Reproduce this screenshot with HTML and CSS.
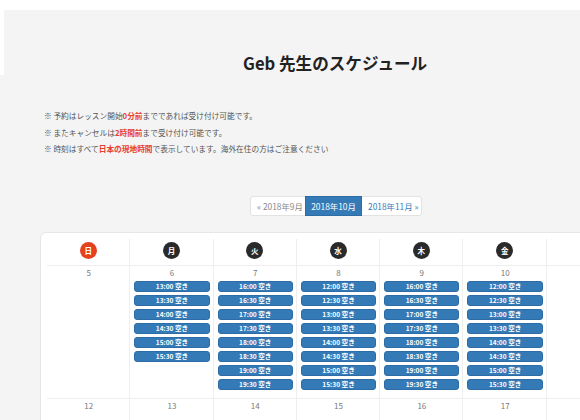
FILE: index.html
```html
<!DOCTYPE html>
<html lang="ja">
<head>
<meta charset="utf-8">
<link rel="stylesheet" href="styles.css">
</head>
<body>
<div class="page">
  <header class="hero">
    <h1 class="title">Geb 先生のスケジュール</h1>
  </header>
  <div class="notes">
    <p>※ 予約はレッスン開始<b>0分前</b>までであれば受け付け可能です。</p>
    <p>※ またキャンセルは<b>2時間前</b>まで受け付け可能です。</p>
    <p>※ 時刻はすべて<b>日本の現地時間</b>で表示しています。海外在住の方はご注意ください</p>
  </div>
  <nav class="pager">
    <a class="pg prev">« 2018年9月</a>
    <a class="pg active">2018年10月</a>
    <a class="pg next">2018年11月 »</a>
  </nav>
  <div class="card">
    <div class="cal">
      <div class="hd"><span class="dow sun">日</span></div>
      <div class="hd"><span class="dow">月</span></div>
      <div class="hd"><span class="dow">火</span></div>
      <div class="hd"><span class="dow">水</span></div>
      <div class="hd"><span class="dow">木</span></div>
      <div class="hd"><span class="dow">金</span></div>
      <div class="hd"></div>

      <div class="day"><div class="num">5</div></div>
      <div class="day"><div class="num">6</div>
        <div class="slot">13:00 空き</div><div class="slot">13:30 空き</div><div class="slot">14:00 空き</div><div class="slot">14:30 空き</div><div class="slot">15:00 空き</div><div class="slot">15:30 空き</div>
      </div>
      <div class="day"><div class="num">7</div>
        <div class="slot">16:00 空き</div><div class="slot">16:30 空き</div><div class="slot">17:00 空き</div><div class="slot">17:30 空き</div><div class="slot">18:00 空き</div><div class="slot">18:30 空き</div><div class="slot">19:00 空き</div><div class="slot">19:30 空き</div>
      </div>
      <div class="day"><div class="num">8</div>
        <div class="slot">12:00 空き</div><div class="slot">12:30 空き</div><div class="slot">13:00 空き</div><div class="slot">13:30 空き</div><div class="slot">14:00 空き</div><div class="slot">14:30 空き</div><div class="slot">15:00 空き</div><div class="slot">15:30 空き</div>
      </div>
      <div class="day"><div class="num">9</div>
        <div class="slot">16:00 空き</div><div class="slot">16:30 空き</div><div class="slot">17:00 空き</div><div class="slot">17:30 空き</div><div class="slot">18:00 空き</div><div class="slot">18:30 空き</div><div class="slot">19:00 空き</div><div class="slot">19:30 空き</div>
      </div>
      <div class="day"><div class="num">10</div>
        <div class="slot">12:00 空き</div><div class="slot">12:30 空き</div><div class="slot">13:00 空き</div><div class="slot">13:30 空き</div><div class="slot">14:00 空き</div><div class="slot">14:30 空き</div><div class="slot">15:00 空き</div><div class="slot">15:30 空き</div>
      </div>
      <div class="day"></div>

      <div class="day"><div class="num">12</div></div>
      <div class="day"><div class="num">13</div></div>
      <div class="day"><div class="num">14</div></div>
      <div class="day"><div class="num">15</div></div>
      <div class="day"><div class="num">16</div></div>
      <div class="day"><div class="num">17</div></div>
      <div class="day"></div>
    </div>
  </div>
</div>
</body>
</html>
```
FILE: styles.css
```css
html, body {
  margin: 0;
  padding: 0;
  overflow: hidden;
  background: #fff;
}
body {
  font-family: "Noto Sans CJK JP", "Noto Sans", sans-serif;
  color: #555;
}
.page {
  margin-top: 10px;
  background: #f4f4f4;
  min-height: 410px;
  padding-bottom: 40px;
}
.hero {
  height: 65px;
  border-left: 4px solid #fff;
  box-sizing: border-box;
}
.title {
  margin: 0;
  padding: 43px 0 0 239px;
  font-size: 16.6px;
  line-height: 20px;
  font-weight: 700;
  color: #222;
  white-space: nowrap;
}
.notes {
  margin-top: 33px;
  padding-left: 44px;
}
.notes p {
  margin: 0;
  font-size: 7.7px;
  line-height: 16.5px;
  color: #555;
  white-space: nowrap;
}
.notes b {
  color: #e8402a;
  font-weight: 700;
}
.pager {
  margin: 38px 0 0 250px;
  display: flex;
  width: max-content;
  background: #fff;
  border: 1px solid #e2e2e2;
  border-radius: 3px;
  height: 18px;
}
.pg {
  display: flex;
  align-items: center;
  padding: 0 6px;
  font-size: 8.4px;
  color: #337ab7;
  white-space: nowrap;
}
.pg.prev {
  color: #888;
  width: 42px;
}
.pg.active {
  background: #337ab7;
  color: #fff;
  margin: -1px 0;
  width: 43px;
  justify-content: center;
  border: 1px solid #2e6da4;
}
.pg.next {
  width: 47px;
}
.card {
  margin: 16px 0 0 40px;
  width: 620px;
  padding: 6px;
  background: #fff;
  border: 1px solid #e6e6e6;
  border-radius: 6px;
  box-sizing: border-box;
}
.cal {
  display: grid;
  grid-template-columns: repeat(7, 83.3px);
}
.hd {
  display: flex;
  justify-content: center;
  padding: 3px 0 6px;
  min-height: 17px;
  border-right: 1px solid #eee;
  border-bottom: 1px solid #eee;
}
.dow {
  width: 17px;
  height: 17px;
  border-radius: 50%;
  background: #2a2a2a;
  color: #fff;
  font-size: 7.5px;
  font-weight: 700;
  display: flex;
  align-items: center;
  justify-content: center;
}
.dow.sun {
  background: #e6411d;
}
.day {
  padding: 1px 3px 5px 4px;
  border-right: 1px solid #eee;
  border-bottom: 1px solid #eee;
  min-height: 110px;
}
.num {
  text-align: center;
  font-size: 8px;
  line-height: 12px;
  color: #777;
  margin-bottom: 2px;
}
.slot {
  height: 11px;
  box-sizing: border-box;
  margin-bottom: 3px;
  background: #337ab7;
  border: 1px solid #2d6ca6;
  border-radius: 3px;
  color: #fff;
  font-size: 6.6px;
  font-weight: 700;
  line-height: 9px;
  text-align: center;
  white-space: nowrap;
}
```
